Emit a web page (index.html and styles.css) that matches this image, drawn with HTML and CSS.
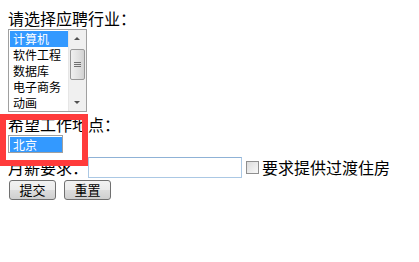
FILE: index.html
```html
<!DOCTYPE html>
<html lang="zh-cn">
<head>
    <meta charset="UTF-8">
    <title>应聘表单</title>
    <link rel="stylesheet" href="styles.css">
</head>
<body>
    <form class="form">
        <div class="label">请选择应聘行业：</div>
        <div class="listbox">
            <div class="items">
                <div class="item selected">计算机</div>
                <div class="item">软件工程</div>
                <div class="item">数据库</div>
                <div class="item">电子商务</div>
                <div class="item">动画</div>
            </div>
            <div class="scrollbar">
                <div class="arrow up"></div>
                <div class="track">
                    <div class="thumb"><span></span><span></span><span></span></div>
                </div>
                <div class="arrow down"></div>
            </div>
        </div>

        <div class="label city-label">希望工作地点：</div>
        <div class="listbox city">
            <div class="item selected">北京</div>
        </div>

        <div class="row">
            <span class="label">月薪要求：</span><input type="text" class="salary"><span class="check"></span><span class="label">要求提供过渡住房</span>
        </div>

        <div class="buttons">
            <button type="submit" class="btn">提交</button>
            <button type="reset" class="btn">重置</button>
        </div>
    </form>

    <div class="highlight"></div>
</body>
</html>
```

FILE: styles.css
```css
body {
    margin: 8px;
    font-family: "Noto Sans CJK SC", "Liberation Sans", sans-serif;
    font-size: 16px;
    color: #000;
    background: #fff;
}
.label {
    line-height: 21px;
    height: 21px;
}
.listbox {
    display: flex;
    width: 77px;
    height: 81px;
    border: 1px solid #a0a0a0;
    background: #fff;
}
.items {
    flex: 1;
    padding: 1px 0 0 1px;
}
.item {
    font-size: 12px;
    line-height: 16px;
    height: 16px;
    padding-left: 3px;
}
.item.selected {
    background: #3399ff;
    color: #fff;
}
.scrollbar {
    width: 17px;
    display: flex;
    flex-direction: column;
    background: #f0f0f0;
    border-left: 1px solid #e6e6e6;
}
.arrow {
    height: 17px;
    position: relative;
}
.arrow::after {
    content: "";
    position: absolute;
    left: 5px;
    top: 7px;
    border-left: 3px solid transparent;
    border-right: 3px solid transparent;
}
.arrow.up::after {
    border-bottom: 3px solid #505050;
}
.arrow.down::after {
    border-top: 3px solid #505050;
}
.track {
    flex: 1;
    padding-top: 2px;
}
.thumb {
    height: 29px;
    margin: 0 1px;
    border: 1px solid #989898;
    border-radius: 2px;
    background: linear-gradient(to right, #f0f0f0, #e0e0e0 60%, #d2d2d2);
    display: flex;
    flex-direction: column;
    justify-content: center;
    gap: 1px;
    align-items: center;
}
.thumb span {
    width: 7px;
    height: 1px;
    background: #707070;
}
.city-label {
    margin-top: 2px;
}
.listbox.city {
    width: 52px;
    height: 15px;
    padding: 1px 0 0 1px;
    display: block;
    box-sizing: content-box;
}
.listbox.city .item {
    line-height: 15px;
    height: 15px;
}
.row {
    display: flex;
    align-items: center;
    margin-top: 3px;
    height: 22px;
}
.salary {
    width: 150px;
    height: 17px;
    margin: 0 4px 0 0;
    padding: 1px;
    border: 1px solid #abc8e4;
    border-top-color: #8fb2d6;
    font-family: inherit;
}
.check {
    width: 11px;
    height: 11px;
    margin-right: 3px;
    border: 1px solid #8f8f8f;
    background: linear-gradient(135deg, #dcdcdc, #f8f8f8);
}
.buttons {
    margin-top: 2px;
    display: flex;
    gap: 8px;
    padding-left: 1px;
}
.btn {
    width: 47px;
    height: 20px;
    padding: 0;
    font-family: inherit;
    font-size: 13px;
    line-height: 16px;
    border: 1px solid #707070;
    border-radius: 3px;
    background: linear-gradient(#f2f2f2, #ebebeb 50%, #dddddd 50%, #cfcfcf);
    color: #000;
}
.highlight {
    position: absolute;
    left: 0;
    top: 114px;
    width: 76px;
    height: 40px;
    border: 6px solid #ff3b3b;
}
```
